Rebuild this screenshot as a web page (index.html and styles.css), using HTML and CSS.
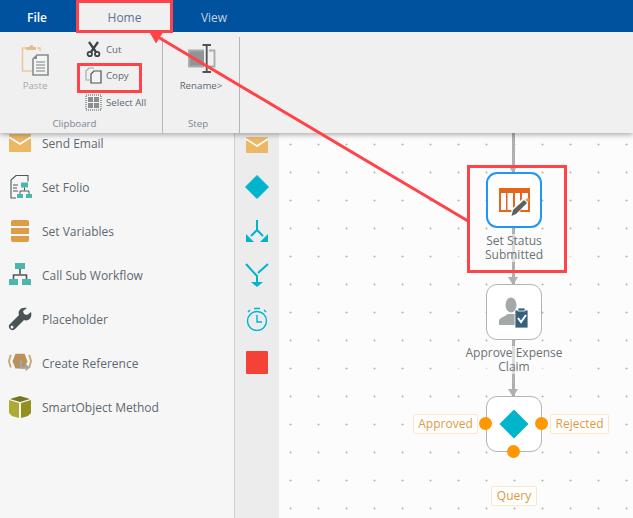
FILE: index.html
```html
<!DOCTYPE html>
<html>

<head>
    <meta charset="utf-8">
    <title>Workflow designer</title>
    <link rel="stylesheet" href="styles.css">
</head>

<body>
    <div class="app">
        <div class="top">
            <div class="tabs">
                <div class="tab tab-file">File</div>
                <div class="tab tab-home">Home</div>
                <div class="tab tab-view">View</div>
            </div>

            <div class="ribbon">
                <div class="group group-clipboard">
                    <div class="group-body">
                        <div class="big-btn paste">
                            <svg width="30" height="32" viewBox="0 0 30 32">
                                <path d="M6 4H2.500V27H12M17 4h3v3" fill="none" stroke="#e9c9a0" stroke-width="1.600"/>
                                <path d="M6 6V3h3.500a2 2 0 0 1 4 0H16v3z" fill="#e3bd8e"/>
                                <path d="M17 11h11v20H13V15z" fill="#f4f4f4" stroke="#858c8c" stroke-width="1.600"/>
                                <path d="M17 11v4h-4z" fill="#858c8c"/>
                                <path d="M16 18h9M16 21h9M16 24h9M16 27h9" stroke="#a3a8a8" stroke-width="1.300"/>
                            </svg>
                            <span>Paste</span>
                        </div>
                        <div class="small-btns">
                            <div class="small-btn">
                                <svg width="17" height="17" viewBox="0 0 17 17">
                                    <path d="M4 1l7 10M13 1L6 11" stroke="#39434a" stroke-width="2.200"/>
                                    <circle cx="4.800" cy="13" r="2.200" fill="none" stroke="#39434a" stroke-width="1.800"/>
                                    <circle cx="12.200" cy="13" r="2.200" fill="none" stroke="#39434a" stroke-width="1.800"/>
                                </svg>
                                <span>Cut</span>
                            </div>
                            <div class="small-btn">
                                <svg width="17" height="17" viewBox="0 0 17 17">
                                    <path d="M9 1H4L1 4v9h4" fill="none" stroke="#a4a9a9" stroke-width="1.100"/>
                                    <path d="M9 4h7v12H6V7z" fill="#f4f4f4" stroke="#4b5558" stroke-width="1.200"/>
                                </svg>
                                <span>Copy</span>
                            </div>
                            <div class="small-btn">
                                <svg width="17" height="17" viewBox="0 0 17 17">
                                    <rect x="1" y="1" width="15" height="15" fill="none" stroke="#4b5558" stroke-dasharray="1 1"/>
                                    <path d="M3 3h5v5H3zM9 3h5v5H9zM3 9h5v5H3zM9 9h5v5H9z" fill="#8b8f91"/>
                                </svg>
                                <span>Select All</span>
                            </div>
                        </div>
                    </div>
                    <div class="group-name">Clipboard</div>
                </div>

                <div class="group group-step">
                    <div class="group-body">
                        <div class="big-btn rename">
                            <svg width="30" height="32" viewBox="0 0 30 32">
                                <path d="M3 7h15v15H3z" fill="#8f9494"/>
                                <path d="M18 6.500H3v16h15M23 6.500h5.500v16H23" fill="none" stroke="#a6abab" stroke-width="1.800"/>
                                <path d="M20.700 1v27M16.500 1h8.500M16.500 28h8.500" fill="none" stroke="#4c5658" stroke-width="1.800"/>
                            </svg>
                            <span>Rename&gt;</span>
                        </div>
                    </div>
                    <div class="group-name">Step</div>
                </div>
            </div>
        </div>

        <div class="main">
            <div class="sidebar">
                <div class="item">
                    <svg width="24" height="18" viewBox="0 0 24 18">
                        <rect x="1" y="0" width="22" height="18" rx="1" fill="#ecb866"/>
                        <path d="M1 3l11 7 11-7" fill="none" stroke="#fff" stroke-width="1.500"/>
                    </svg>
                    <span>Send Email</span>
                </div>
                <div class="item">
                    <svg width="24" height="24" viewBox="0 0 24 24">
                        <path d="M8 23H3V5L8 .500H20V6.500" fill="none" stroke="#4d5759" stroke-width="1.100"/>
                        <path d="M5 10h5M5 13h4M5 16h5" stroke="#4d5759" stroke-width="1.100"/>
                        <path d="M13 7.500h7v5h-7zM9 19h6v4H9zM18 19h6v4h-6z" fill="#4db6ac"/>
                        <path d="M16.500 12.500v3M12 19v-3h9v3" fill="none" stroke="#4d5759"/>
                    </svg>
                    <span>Set Folio</span>
                </div>
                <div class="item">
                    <svg width="24" height="24" viewBox="0 0 24 24">
                        <path d="M3 3a2 2 0 0 1 2-2h14a2 2 0 0 1 2 2v4H3zM3 9h18v6H3zM3 17h18v4a2 2 0 0 1-2 2H5a2 2 0 0 1-2-2z" fill="#de9c46"/>
                    </svg>
                    <span>Set Variables</span>
                </div>
                <div class="item">
                    <svg width="24" height="24" viewBox="0 0 24 24">
                        <path d="M7 0h10v6H7zM1 16h9v6H1zM14 16h9v6h-9z" fill="#4db6ac"/>
                        <path d="M12 6v5M5.500 16v-4h13v4" fill="none" stroke="#4d5759" stroke-width="1.600"/>
                    </svg>
                    <span>Call Sub Workflow</span>
                </div>
                <div class="item">
                    <svg width="24" height="24" viewBox="0 0 24 24">
                        <path d="M23 5l-4 3-3-1-1-3 4-3c-3-1-7 0-8 3-.6 2-.4 3 0 4L2 17c-2 2-1 4 0 5s3 2 5 0l9-9c1 .5 3 .6 4 0 3-1 4-5 3-8z" fill="#4a5356"/>
                        <circle cx="4" cy="20" r="1.500" fill="#f6f6f6"/>
                    </svg>
                    <span>Placeholder</span>
                </div>
                <div class="item">
                    <svg width="26" height="24" viewBox="0 0 26 24">
                        <path d="M8 2h10l3 8-3 8H8l-3-8z" fill="#bb9059"/>
                        <path d="M3 3L1 10l2 7M23 3l2 7-2 7" fill="none" stroke="#c9a679" stroke-width="2"/>
                        <path d="M14 9v8h6" fill="none" stroke="#a2a5a6" stroke-width="2.600"/>
                        <path d="M19 13l5 4-5 4z" fill="#a2a5a6"/>
                    </svg>
                    <span>Create Reference</span>
                </div>
                <div class="item">
                    <svg width="24" height="24" viewBox="0 0 24 24">
                        <path d="M12 1l10 3-10 3L2 4z" fill="#74751f"/>
                        <path d="M1 5l10 3v15L4 21l-3-3z" fill="#adab33"/>
                        <path d="M23 5l-10 3v15l7-2 3-3z" fill="#92911f"/>
                    </svg>
                    <span>SmartObject Method</span>
                </div>
            </div>

            <div class="strip">
                <svg width="24" height="18" viewBox="0 0 24 18">
                    <rect x="1" y="0" width="22" height="16" rx="1" fill="#ecb866"/>
                    <path d="M1 2l11 7 11-7" fill="none" stroke="#fff" stroke-width="1.500"/>
                </svg>
                <svg width="24" height="24" viewBox="0 0 24 24">
                    <path d="M12 .500L23.500 12 12 23.500.500 12z" fill="#00b4cc" stroke="#00b4cc" stroke-linejoin="round"/>
                </svg>
                <svg width="24" height="24" viewBox="0 0 24 24">
                    <path d="M12 1v10l-6 6M12 11l6 6" fill="none" stroke="#00b4cc" stroke-width="2"/>
                    <path d="M1 15v8h8zM23 15v8h-8z" fill="#00b4cc"/>
                </svg>
                <svg width="24" height="24" viewBox="0 0 24 24">
                    <path d="M1 1l11 12v7M23 1l-10 9" fill="none" stroke="#00b4cc" stroke-width="2"/>
                    <path d="M6 19h12l-6 5z" fill="#00b4cc"/>
                </svg>
                <svg width="24" height="24" viewBox="0 0 24 24">
                    <circle cx="12" cy="14" r="9.500" fill="none" stroke="#00b4cc" stroke-width="1.400"/>
                    <path d="M12 8v7h5M9 1.500h6M3 5l2-2M21 5l-2-2" fill="none" stroke="#00b4cc" stroke-width="1.400"/>
                </svg>
                <svg width="24" height="24" viewBox="0 0 24 24">
                    <rect x="1" y="0" width="22" height="23" rx="1" fill="#f44336"/>
                </svg>
            </div>

            <div class="canvas">
                <div class="wire wire-a"></div>
                <div class="wire wire-b"></div>
                <div class="wire wire-c"></div>
                <div class="head head-a"></div>
                <div class="head head-b"></div>
                <div class="head head-c"></div>

                <div class="node node-status">
                    <svg width="32" height="32" viewBox="0 0 32 32">
                        <path d="M1 4h31v24H1z" fill="#e6651b"/>
                        <path d="M3 9h5v17H3zM9.500 9H15v17H9.500zM17 9h5v17h-5zM24 9h6v17h-6z" fill="#fdfdfd"/>
                        <path d="M12 32l2-7 11-11 5 5-11 11z" fill="#fff"/>
                        <path d="M13.500 32l1.500-6 11-10 3 3-11 11z" fill="#596163"/>
                        <circle cx="29.500" cy="16" r="1.800" fill="#e89a4a"/>
                    </svg>
                </div>
                <div class="caption caption-status">Set Status<br>Submitted</div>

                <div class="node node-approve">
                    <svg width="32" height="32" viewBox="0 0 32 32">
                        <ellipse cx="13" cy="9" rx="5.500" ry="7.500" fill="#a5a8a9"/>
                        <path d="M1 29v-4c0-3 5-4 9-7h7v11z" fill="#a5a8a9"/>
                        <path d="M17 14h13v18H17z" fill="#37607c" stroke="#fff" stroke-width=".8"/>
                        <path d="M20 12h7v3h-7z" fill="#37607c" stroke="#fff" stroke-width=".8"/>
                        <path d="M20 22l3 4 5-7" fill="none" stroke="#fff" stroke-width="2"/>
                    </svg>
                </div>
                <div class="caption caption-approve">Approve Expense<br>Claim</div>

                <div class="node node-decision">
                    <svg width="32" height="32" viewBox="0 0 32 32">
                        <path d="M16 2.500L29.500 16 16 29.500 2.500 16z" fill="#00b4cc" stroke="#00b4cc" stroke-linejoin="round" stroke-width="1.500"/>
                    </svg>
                </div>

                <div class="port port-left"></div>
                <div class="port port-right"></div>
                <div class="port port-bottom"></div>

                <div class="outcome outcome-approved">Approved</div>
                <div class="outcome outcome-rejected">Rejected</div>
                <div class="outcome outcome-query">Query</div>
            </div>
        </div>

        <div class="mark mark-home"></div>
        <div class="mark mark-copy"></div>
        <div class="mark mark-status"></div>
        <svg class="pointer" width="633" height="518" viewBox="0 0 633 518">
            <path d="M468 221L158 37" stroke="#ff4348" stroke-width="3"/>
            <path d="M150 33l13-.5-7 11z" fill="#ff4348"/>
        </svg>
    </div>
</body>

</html>
```

FILE: styles.css
```css
html, body {
    margin: 0;
    padding: 0;
}

body {
    font-family: "Open Sans", "Liberation Sans", sans-serif;
    font-size: 12px;
    color: #5d6870;
}

.app {
    position: relative;
    width: 633px;
    height: 518px;
    overflow: hidden;
    display: flex;
    flex-direction: column;
}

/* top bar */
.top {
    position: relative;
    z-index: 2;
    box-shadow: 0 2px 5px rgba(0, 0, 0, 0.3);
}

.tabs {
    display: flex;
    height: 32px;
    background: #00529f;
    line-height: 35px;
}

.tab {
    text-align: center;
}

.tab-file {
    width: 77px;
    color: #fff;
    font-weight: 600;
    padding-right: 3px;
    box-sizing: border-box;
}

.tab-home {
    width: 95px;
    background: #f0f0f0;
    color: #5d7390;
}

.tab-view {
    width: 84px;
    color: #c3d3e6;
}

.ribbon {
    display: flex;
    height: 101px;
    background: #f0f0f0;
    font-size: 9.700px;
}

.group {
    display: flex;
    flex-direction: column;
    margin-top: 5px;
    border-right: 1px solid #b5b5b5;
    box-sizing: border-box;
}

.group-clipboard {
    width: 163px;
}

.group-step {
    width: 77px;
}

.group-body {
    height: 77px;
    display: flex;
}

.group-name {
    padding-top: 3px;
    text-align: center;
    color: #7c8790;
}

.group-clipboard .group-name {
    padding-right: 13px;
}

.group-step .group-name {
    padding-right: 6px;
}

.big-btn {
    display: flex;
    flex-direction: column;
    align-items: center;
    gap: 3px;
    padding-top: 7px;
}

.big-btn span {
    line-height: 14px;
}

.paste {
    width: 70px;
    color: #a3a9ad;
}

.rename {
    width: 100%;
    color: #5d6870;
}

.small-btns {
    display: flex;
    flex-direction: column;
    margin-left: 15px;
    margin-top: -1px;
}

.small-btn {
    display: flex;
    align-items: center;
    gap: 4px;
    height: 26.500px;
    flex: none;
}

/* left list */
.main {
    flex: 1;
    display: flex;
    min-height: 0;
}

.sidebar {
    width: 234px;
    background: #f6f6f6;
    margin-top: -12px;
}

.item {
    display: flex;
    align-items: center;
    height: 44px;
    padding-left: 8px;
    gap: 10px;
}

.item svg {
    width: 24px;
    flex: none;
}

.strip {
    width: 45px;
    box-sizing: border-box;
    background: #ececec;
    border-left: 1px solid #cfcfcf;
    display: flex;
    flex-direction: column;
    align-items: center;
    padding-top: 4px;
    gap: 20px;
}

/* the canvas is a free surface, nodes sit at their own coordinates */
.canvas {
    position: relative;
    flex: 1;
    background-color: #fcfcfc;
    background-image: radial-gradient(circle at 11.500px 11.500px, #b4b4b4 0.800px, transparent 1.200px);
    background-size: 28px 28px;
}

.wire {
    position: absolute;
    left: 233px;
    width: 3px;
    background: #b0b0b0;
}

.wire-a {
    top: 0;
    height: 40px;
}

.wire-b {
    top: 94px;
    height: 60px;
}

.wire-c {
    top: 206px;
    height: 60px;
}

.head {
    position: absolute;
    left: 229px;
    width: 0;
    height: 0;
    border-left: 5.500px solid transparent;
    border-right: 5.500px solid transparent;
    border-top: 8px solid #b0b0b0;
}

.head-a {
    top: 32px;
}

.head-b {
    top: 144px;
}

.head-c {
    top: 256px;
}

.node {
    position: absolute;
    left: 207px;
    width: 56px;
    height: 56px;
    box-sizing: border-box;
    border: 1.500px solid #b3b3b3;
    border-radius: 11px;
    background: #fff;
    display: flex;
    align-items: center;
    justify-content: center;
}

.node-status {
    top: 39px;
    border: 2px solid #2196f3;
}

.node-approve {
    top: 151px;
}

.node-decision {
    top: 263px;
}

.caption {
    position: absolute;
    left: 164px;
    width: 142px;
    text-align: center;
    line-height: 14px;
    color: #6a7276;
    background: rgba(252, 252, 252, 0.6);
}

.caption-status {
    top: 101px;
}

.caption-approve {
    top: 213px;
}

.port {
    position: absolute;
    width: 13px;
    height: 13px;
    border-radius: 50%;
    background: #ff9800;
}

.port-left {
    left: 200px;
    top: 284px;
}

.port-right {
    left: 256px;
    top: 284px;
}

.port-bottom {
    left: 228px;
    top: 312px;
}

.outcome {
    position: absolute;
    box-sizing: border-box;
    height: 20px;
    line-height: 17px;
    text-align: center;
    color: #dd9a43;
    background: #fff;
    border: 1.500px solid #fde6c6;
    border-radius: 2px;
}

.outcome-approved {
    left: 134px;
    top: 281px;
    width: 65px;
}

.outcome-rejected {
    left: 271px;
    top: 281px;
    width: 59px;
}

.outcome-query {
    left: 212px;
    top: 353px;
    width: 46px;
}

/* red annotations lie over the screenshot */
.mark {
    position: absolute;
    z-index: 3;
    box-sizing: border-box;
    border: 3px solid #ff4348;
}

.mark-home {
    left: 76px;
    top: 0;
    width: 97px;
    height: 33px;
}

.mark-copy {
    left: 77px;
    top: 63px;
    width: 65px;
    height: 30px;
}

.mark-status {
    left: 467px;
    top: 165px;
    width: 100px;
    height: 108px;
}

.pointer {
    position: absolute;
    left: 0;
    top: 0;
    z-index: 3;
}
```
